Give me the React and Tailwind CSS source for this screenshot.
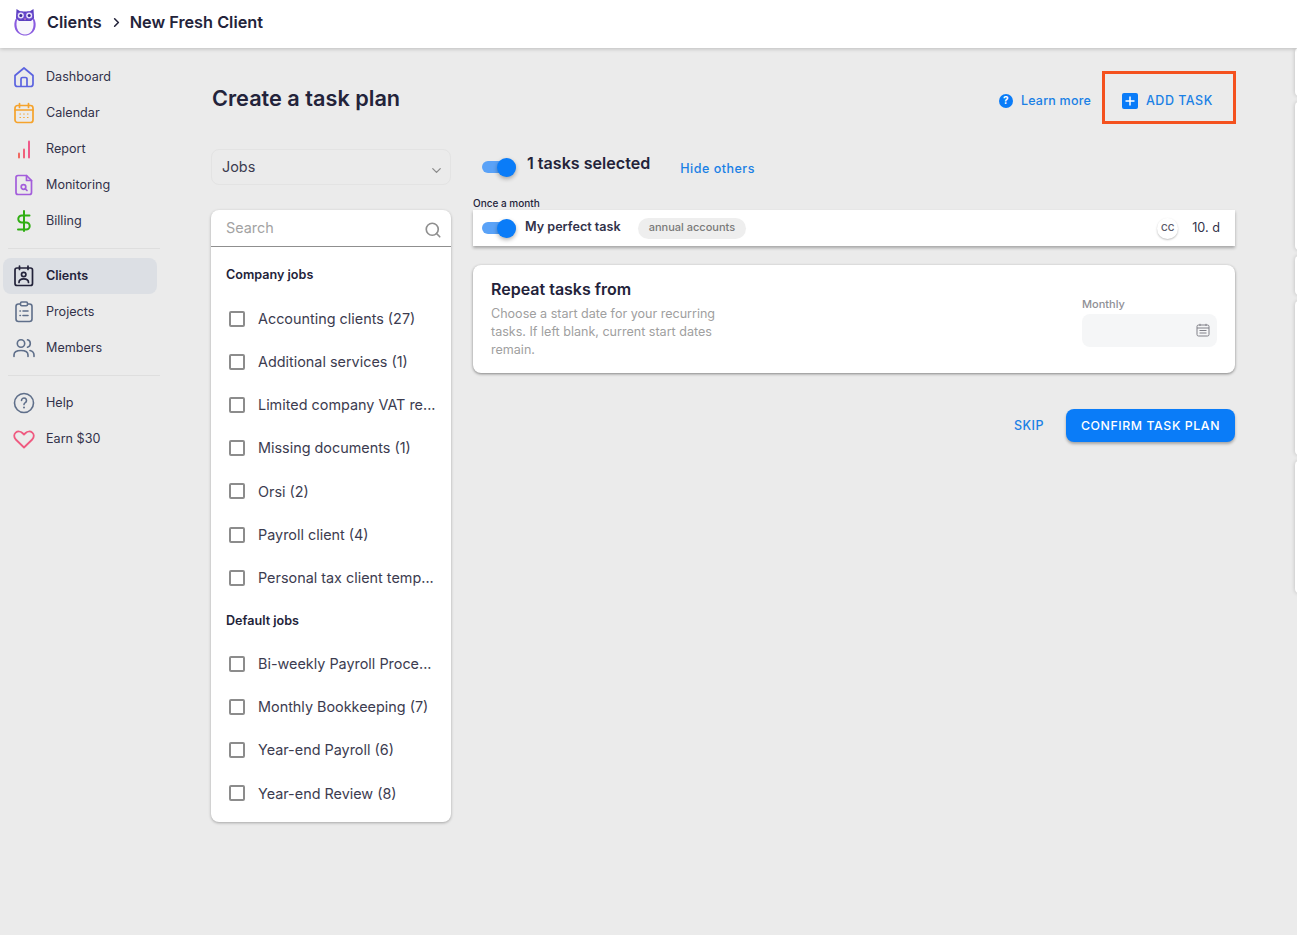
import React from "react";
import { ChevronDown, ChevronRight, Search } from "lucide-react";

const font = { fontFamily: "Inter, sans-serif" };

const companyJobs = [
  "Accounting clients (27)",
  "Additional services (1)",
  "Limited company VAT re...",
  "Missing documents (1)",
  "Orsi (2)",
  "Payroll client (4)",
  "Personal tax client temp...",
];

const defaultJobs = [
  "Bi-weekly Payroll Proce...",
  "Monthly Bookkeeping (7)",
  "Year-end Payroll (6)",
  "Year-end Review (8)",
];

function HomeIcon() {
  return (
    <svg width="22" height="22" viewBox="0 0 22 22" fill="none" stroke="#5b63e0" strokeWidth="1.7" strokeLinejoin="round">
      <path d="M2 9.5 11 2l9 7.5V18a2.5 2.5 0 0 1-2.5 2.5h-13A2.5 2.5 0 0 1 2 18z" />
      <path d="M8 20.5V13a1.5 1.5 0 0 1 1.5-1.5h3A1.500 1.500 0 0 1 14 13v7.500" />
    </svg>
  );
}

function CalendarIcon() {
  return (
    <svg width="22" height="22" viewBox="0 0 22 22" fill="none" stroke="#f5a32c" strokeWidth="1.7" strokeLinecap="round">
      <rect x="2" y="3.500" width="18" height="17" rx="2.500" />
      <path d="M2 8h18M6.500 1.500v4M15.500 1.500v4" />
      <path d="M7 12h.5M10.700 12h.5M14.500 12h.5M7 15.500h.5M10.700 15.500h.5M14.500 15.500h.5" strokeWidth="1.200" />
    </svg>
  );
}

function ReportIcon() {
  return (
    <svg width="22" height="22" viewBox="0 0 22 22" fill="none" strokeWidth="2" strokeLinecap="round">
      <path d="M6 19.500v-4" stroke="#f0685f" />
      <path d="M11 19.500v-8" stroke="#f0607a" />
      <path d="M16 19.500V3.500" stroke="#ef5a8a" />
    </svg>
  );
}

function MonitoringIcon() {
  return (
    <svg width="22" height="22" viewBox="0 0 22 22" fill="none" stroke="#a35ddb" strokeWidth="1.700" strokeLinejoin="round" strokeLinecap="round">
      <path d="M5 1.500h8.500l5 5V18.500a2 2 0 0 1-2 2H5a2 2 0 0 1-2-2v-15a2 2 0 0 1 2-2z" />
      <path d="M13.500 1.500v5h5" />
      <circle cx="10.500" cy="13" r="2.300" />
      <path d="m12.300 14.800 1.700 1.700" />
    </svg>
  );
}

function ClientsIcon() {
  return (
    <svg width="22" height="22" viewBox="0 0 22 22" fill="none" stroke="#23233a" strokeWidth="1.700" strokeLinecap="round">
      <rect x="2" y="3" width="17.500" height="17.500" rx="2" />
      <path d="M6.500 1v3.500M15 1v3.500" />
      <circle cx="10.700" cy="9.500" r="2.200" />
      <path d="M6 17.500c0-2.500 2-3.700 4.700-3.700s4.800 1.200 4.800 3.700" />
    </svg>
  );
}

function ProjectsIcon() {
  return (
    <svg width="22" height="22" viewBox="0 0 22 22" fill="none" stroke="#5f6f8a" strokeWidth="1.600" strokeLinecap="round">
      <rect x="3" y="3" width="16" height="17.500" rx="2.500" />
      <rect x="7.500" y="1" width="7" height="3.800" rx="1.200" fill="#ececec" />
      <path d="M7 10h.4M10 10h5M7 14.500h.4M10 14.500h5" />
    </svg>
  );
}

function MembersIcon() {
  return (
    <svg width="22" height="22" viewBox="0 0 22 22" fill="none" stroke="#5f6f8a" strokeWidth="1.600" strokeLinecap="round">
      <circle cx="8" cy="6.500" r="3.700" />
      <path d="M1 19.500v-1.500c0-3 2.500-4.500 7-4.500s7 1.500 7 4.500v1.500" />
      <path d="M14.500 2.800c1.800.4 2.800 1.900 2.800 3.700s-1 3.200-2.800 3.700" />
      <path d="M17 13.500c2.500.6 4 2 4 4.500v1.500" />
    </svg>
  );
}

function HelpIcon() {
  return (
    <svg width="22" height="22" viewBox="0 0 22 22" fill="none" stroke="#5f6f8a" strokeWidth="1.600" strokeLinecap="round">
      <circle cx="11" cy="11" r="9.500" />
      <path d="M8.500 8.500a2.500 2.500 0 1 1 3.800 2.100c-.8.500-1.300 1-1.300 2" />
      <path d="M11 15.500h.01" strokeWidth="2" />
    </svg>
  );
}

function HeartIcon() {
  return (
    <svg width="22" height="22" viewBox="0 0 22 22" fill="none" stroke="#ef5a80" strokeWidth="1.800" strokeLinejoin="round">
      <path d="M11 19.500 2.800 11.500C.6 9.300.8 6.200 2.700 4.600c2-1.700 5-1.300 6.700.4L11 6.500l1.600-1.500c1.700-1.700 4.700-2.100 6.700-.4 1.900 1.600 2.100 4.700-.1 6.900z" />
    </svg>
  );
}

function DollarIcon() {
  return (
    <svg width="22" height="22" viewBox="0 0 22 22" fill="none" stroke="#2fae12" strokeWidth="2" strokeLinecap="round">
      <path d="M11 1v20" />
      <path d="M16.500 5.500H8.800a3.500 3.500 0 0 0 0 7h4.400a3.500 3.500 0 0 1 0 7H5" />
    </svg>
  );
}

function OwlLogo() {
  return (
    <svg width="24" height="28" viewBox="0 0 24 28">
      <path d="M3.500 10C1 13 .8 18 2.300 21.500 4 25 7.800 27.500 12 27.500s8-2.500 9.700-6C23.200 18 23 13 20.500 10z" fill="#8a5be0" />
      <path d="M4.500 11c-1.500 3-1.500 8 .5 11.500 1.500 2.500 4 4 7 4s5.500-1.500 7-4c2-3.500 2-8.500.5-11.500z" fill="#f8f6fc" />
      <path d="M3.500 1l4 2.500h9l4-2.500.5 9-3 3H6l-3-3z" fill="#5a3fc0" />
      <circle cx="7.800" cy="7.500" r="3.700" fill="#e6e0f8" stroke="#6a48d0" strokeWidth="1.300" />
      <circle cx="16.200" cy="7.500" r="3.700" fill="#e6e0f8" stroke="#6a48d0" strokeWidth="1.300" />
      <circle cx="7.800" cy="7.500" r="1.500" fill="#3b2a94" />
      <circle cx="16.200" cy="7.500" r="1.500" fill="#3b2a94" />
      <path d="M10.800 10.500h2.400L12 12.500z" fill="#e08ac0" />
    </svg>
  );
}

function NavItem({ icon, label, active }) {
  return (
    <div
      className={
        active
          ? "mx-[3px] flex h-9 w-[154px] items-center gap-[11px] rounded-lg bg-[#dcdfe4] pl-[10px] text-[12.6px] font-semibold text-[#23233a]"
          : "mx-[3px] flex h-9 w-[154px] items-center gap-[11px] pl-[10px] text-[12.6px] text-[#32324a]"
      }
    >
      {icon}
      {label}
    </div>
  );
}

function Toggle() {
  return (
    <div className="relative h-[12px] w-[34px] rounded-full bg-[#5aa2f7]">
      <span className="absolute -top-[3px] right-0 h-[19px] w-[19px] rounded-full bg-[#0a7cf8] shadow-[0_2px_4px_rgba(0,0,0,0.3)]" />
    </div>
  );
}

function JobRow({ label }) {
  return (
    <div className="flex h-[43.200px] items-center gap-[13px] pl-[18px] text-[14.400px] text-[#3c3c50]">
      <span className="h-4 w-4 rounded-[2px] border-2 border-[#8c8c8c]" />
      {label}
    </div>
  );
}

function Sidebar() {
  return (
    <aside className="flex w-[191px] shrink-0 flex-col pt-[11px]">
      <NavItem icon={<HomeIcon />} label="Dashboard" />
      <NavItem icon={<CalendarIcon />} label="Calendar" />
      <NavItem icon={<ReportIcon />} label="Report" />
      <NavItem icon={<MonitoringIcon />} label="Monitoring" />
      <NavItem icon={<DollarIcon />} label="Billing" />
      <div className="my-[9px] ml-2 h-px w-[152px] bg-[#dedede]" />
      <NavItem icon={<ClientsIcon />} label="Clients" active />
      <NavItem icon={<ProjectsIcon />} label="Projects" />
      <NavItem icon={<MembersIcon />} label="Members" />
      <div className="mb-[9px] ml-2 mt-[9px] h-px w-[152px] bg-[#dedede]" />
      <NavItem icon={<HelpIcon />} label="Help" />
      <NavItem icon={<HeartIcon />} label="Earn $30" />
    </aside>
  );
}

function JobsColumn() {
  return (
    <div className="w-[240px] shrink-0">
      <div className="flex h-[36px] items-center justify-between rounded-lg border border-[#e3e3e3] pl-[10px] pr-[6px] text-[14.400px] text-[#3c3c50]">
        Jobs
        <ChevronDown className="mt-[6px] h-[15px] w-[15px] text-[#8a8a8a]" />
      </div>
      <div className="mt-[25px] h-[612px] rounded-lg bg-white shadow-[0_1px_3px_rgba(0,0,0,0.3)]">
        <div className="flex h-[37px] items-center justify-between border-b border-[#8f8f8f] pl-[15px] pr-[9px] text-[14.400px] text-[#a3a3a3]">
          Search
          <Search className="mt-1 h-[18px] w-[18px] text-[#8f8f8f]" strokeWidth={2.200} />
        </div>
        <div className="flex h-[56px] items-center pl-[15px] text-[12.600px] font-semibold text-[#23233a]">Company jobs</div>
        <div className="-mt-[6px]">
          {companyJobs.map((job) => (
            <JobRow key={job} label={job} />
          ))}
        </div>
        <div className="-mb-[1px] flex h-[44px] items-center pl-[15px] text-[12.600px] font-semibold text-[#23233a]">Default jobs</div>
        {defaultJobs.map((job) => (
          <JobRow key={job} label={job} />
        ))}
      </div>
    </div>
  );
}

function TaskColumn() {
  return (
    <div className="ml-[22px] w-[762px]">
      <div className="flex h-[36px] items-center pl-[9px]">
        <Toggle />
        <span className="-mt-2 ml-[11px] text-[16.100px] font-semibold text-[#23233a]">1 tasks selected</span>
        <span className="ml-[30px] mt-[4px] text-[12.500px] font-medium tracking-[0.5px] text-[#1a80e5]">Hide others</span>
      </div>
      <div className="mt-[12px] text-[10px] font-medium leading-[13px] text-[#23233a]">Once a month</div>
      <div className="flex h-[36px] items-center bg-white pl-[9px] pr-[15px] shadow-[0_2px_3px_rgba(0,0,0,0.3)]">
        <Toggle />
        <span className="-mt-[2px] ml-[9px] text-[12.600px] font-semibold text-[#32324a]">My perfect task</span>
        <span className="ml-[17px] flex h-[21px] items-center rounded-full bg-[#eeeeee] px-[11px] pb-[1px] text-[11px] font-medium text-[#7a7a7a]">annual accounts</span>
        <span className="ml-auto flex h-[21px] w-[21px] items-center justify-center rounded-full bg-white text-[9px] font-semibold text-[#5a5a6a] shadow-[0_1px_2px_rgba(0,0,0,0.25)]">CC</span>
        <span className="ml-[14px] text-[12.700px] text-[#32324a]">10. d</span>
      </div>
      <div className="mt-[19px] flex h-[108px] justify-between rounded-lg bg-white pl-[18px] pr-[18px] shadow-[0_1px_3px_rgba(0,0,0,0.45)]">
        <div className="pt-[13px]">
          <div className="text-[16px] font-semibold leading-[22px] text-[#23233a]">Repeat tasks from</div>
          <p className="mt-[5px] w-[240px] text-[12.550px] leading-[18px] text-[#a0a0a0]">
            Choose a start date for your recurring tasks. If left blank, current start dates remain.
          </p>
        </div>
        <div className="pt-[32px]">
          <div className="text-[11px] font-medium leading-[14px] text-[#8f8f96]">Monthly</div>
          <div className="mt-[3px] flex h-[33px] w-[135px] items-center justify-end rounded-lg bg-[#f5f6f7] pb-[1px] pr-[7px]">
            <svg width="14" height="14" viewBox="0 0 14 14" fill="none" stroke="#808088" strokeWidth="1">
              <rect x="1" y="2" width="12" height="11" rx="1.500" />
              <path d="M1 5h12M4 .8v2.200M10 .8v2.200M3.500 7.500h7M3.500 10h7" />
            </svg>
          </div>
        </div>
      </div>
      <div className="mt-[36px] flex items-center justify-end">
        <span className="mr-[22px] mt-[2px] text-[12.500px] font-medium tracking-[0.5px] text-[#1a80e5]">SKIP</span>
        <button className="h-[33px] w-[169px] rounded-lg bg-[#0a7cf8] pt-[1px] text-[12.300px] font-medium tracking-[0.6px] text-white shadow-[0_2px_3px_rgba(0,0,0,0.3)]">
          CONFIRM TASK PLAN
        </button>
      </div>
    </div>
  );
}

// slivers of the next page's cards showing at the right window edge
function EdgeCards() {
  return (
    <div className="absolute left-[1295px] top-[48px] flex w-[6px] flex-col gap-[6px]">
      <div className="h-[48px] rounded-l-[4px] bg-white shadow-[0_0_4px_rgba(0,0,0,0.2)]" />
      <div className="h-[148px] rounded-l-[4px] bg-white shadow-[0_0_4px_rgba(0,0,0,0.2)]" />
      <div className="h-[39px] rounded-l-[4px] bg-white shadow-[0_0_4px_rgba(0,0,0,0.2)]" />
      <div className="h-[154px] rounded-l-[4px] bg-white shadow-[0_0_4px_rgba(0,0,0,0.2)]" />
      <div className="h-[132px] rounded-l-[4px] bg-white shadow-[0_0_4px_rgba(0,0,0,0.2)]" />
    </div>
  );
}

export default function App() {
  return (
    <div style={font} className="relative h-[935px] w-[1297px] overflow-hidden bg-[#ebebeb]">
      <header className="relative z-10 flex h-[48px] items-center bg-white pb-[4px] pl-[13px] text-[16.300px] font-semibold text-[#23233a] shadow-[0_1px_4px_rgba(0,0,0,0.2)]">
        <OwlLogo />
        <span className="ml-[10px]">Clients</span>
        <ChevronRight className="ml-[7px] mr-[6px] h-[15px] w-[15px]" strokeWidth={2.500} />
        <span>New Fresh Client</span>
      </header>
      <EdgeCards />
      <div className="flex">
        <Sidebar />
        <main className="pl-[20px]">
          <div className="flex h-[101px] w-[1025px] items-start justify-between">
            <h1 className="ml-[1px] mt-[36px] text-[21.700px] font-semibold leading-[28px] text-[#23233a]">Create a task plan</h1>
            <div className="mt-[23px] flex items-center">
              <span className="mt-[6px] flex h-[14px] w-[14px] items-center justify-center rounded-full bg-[#0a7cf8] text-[10px] font-bold text-white">?</span>
              <span className="ml-[8px] mt-[7px] text-[12.500px] font-medium tracking-[0.2px] text-[#1a80e5]">Learn more</span>
              <div className="ml-[11px] flex h-[53px] w-[134px] items-center border-[3px] border-[#f4511e] pl-[17px] pt-[6px]">
                <span className="flex h-4 w-4 items-center justify-center rounded-[2px] bg-[#0a7cf8] text-white">
                  <svg width="10" height="10" viewBox="0 0 10 10" stroke="currentColor" strokeWidth="1.500">
                    <path d="M5 .5v9M.5 5h9" />
                  </svg>
                </span>
                <span className="ml-[8px] mt-[1px] text-[12.500px] font-medium tracking-[0.5px] text-[#1a80e5]">ADD TASK</span>
              </div>
            </div>
          </div>
          <div className="flex">
            <JobsColumn />
            <TaskColumn />
          </div>
        </main>
      </div>
    </div>
  );
}
